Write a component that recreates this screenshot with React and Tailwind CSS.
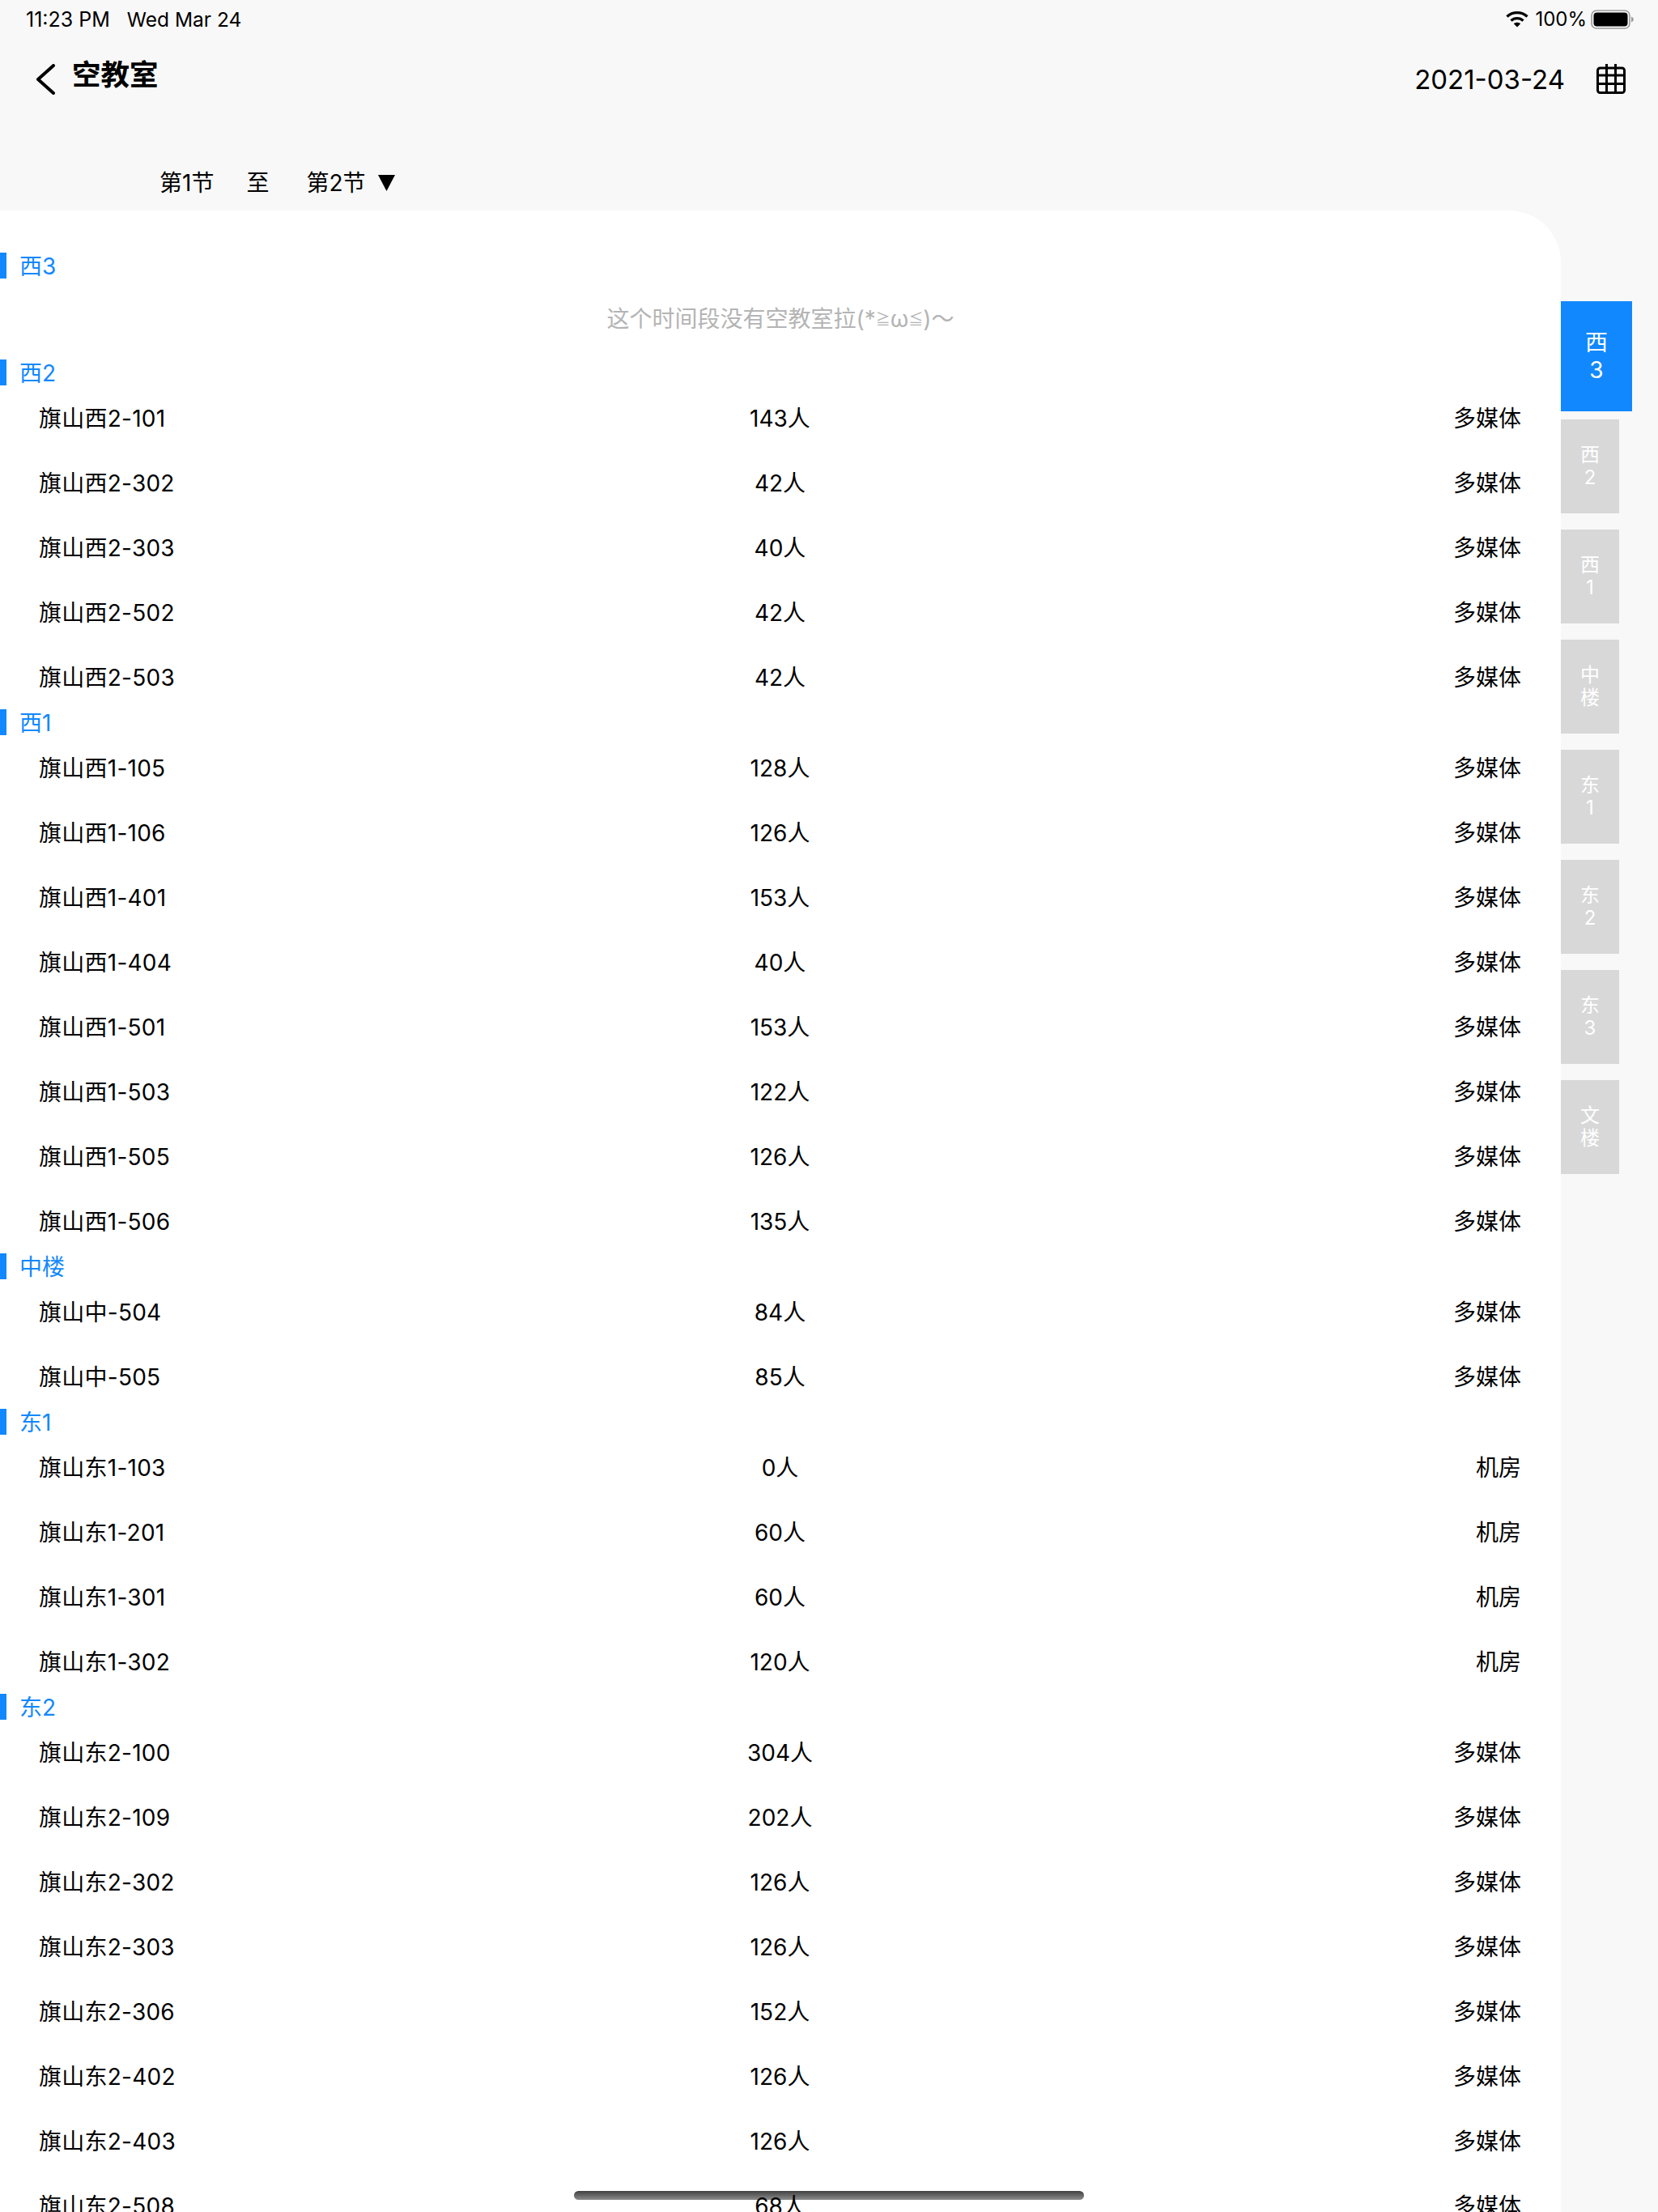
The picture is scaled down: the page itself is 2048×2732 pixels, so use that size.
import React from "react";

const font = "font-['Inter','Noto_Sans_CJK_SC',sans-serif]";

const sections = [
  { name: "西3", rows: [] },
  {
    name: "西2",
    rows: [
      ["旗山西2-101", "143人", "多媒体"],
      ["旗山西2-302", "42人", "多媒体"],
      ["旗山西2-303", "40人", "多媒体"],
      ["旗山西2-502", "42人", "多媒体"],
      ["旗山西2-503", "42人", "多媒体"],
    ],
  },
  {
    name: "西1",
    rows: [
      ["旗山西1-105", "128人", "多媒体"],
      ["旗山西1-106", "126人", "多媒体"],
      ["旗山西1-401", "153人", "多媒体"],
      ["旗山西1-404", "40人", "多媒体"],
      ["旗山西1-501", "153人", "多媒体"],
      ["旗山西1-503", "122人", "多媒体"],
      ["旗山西1-505", "126人", "多媒体"],
      ["旗山西1-506", "135人", "多媒体"],
    ],
  },
  {
    name: "中楼",
    rows: [
      ["旗山中-504", "84人", "多媒体"],
      ["旗山中-505", "85人", "多媒体"],
    ],
  },
  {
    name: "东1",
    rows: [
      ["旗山东1-103", "0人", "机房"],
      ["旗山东1-201", "60人", "机房"],
      ["旗山东1-301", "60人", "机房"],
      ["旗山东1-302", "120人", "机房"],
    ],
  },
  {
    name: "东2",
    rows: [
      ["旗山东2-100", "304人", "多媒体"],
      ["旗山东2-109", "202人", "多媒体"],
      ["旗山东2-302", "126人", "多媒体"],
      ["旗山东2-303", "126人", "多媒体"],
      ["旗山东2-306", "152人", "多媒体"],
      ["旗山东2-402", "126人", "多媒体"],
      ["旗山东2-403", "126人", "多媒体"],
      ["旗山东2-508", "68人", "多媒体"],
    ],
  },
];

const tabs = [
  ["西", "2"],
  ["西", "1"],
  ["中", "楼"],
  ["东", "1"],
  ["东", "2"],
  ["东", "3"],
  ["文", "楼"],
];

function StatusBar() {
  return (
    <div className="flex h-[46px] items-center justify-between pl-[32px] pr-[30px] pt-[1px] text-[25px] leading-[46px] text-black">
      <div className="flex gap-[21px]">
        <span>11:23 PM</span>
        <span className="text-[24.5px]">Wed Mar 24</span>
      </div>
      <div className="flex items-center">
        <svg width="28" height="21" viewBox="0 0 28 21" className="mr-[8px]" fill="none" stroke="black" strokeWidth="3.4">
          <path d="M1.5 7.5C8.5 1 19.5 1 26.5 7.5" />
          <path d="M6.5 12.5C10.8 8.6 17.2 8.6 21.5 12.5" />
          <path d="M14 20.5L9.8 16.2C12.2 14.2 15.8 14.2 18.2 16.2Z" fill="black" stroke="none" />
        </svg>
        <span className="mr-[5px] text-[24px]">100%</span>
        <svg width="53" height="24" viewBox="0 0 53 24">
          <rect x="1" y="1" width="47" height="22" rx="6" fill="none" stroke="#9a9a9a" strokeWidth="1.6" />
          <rect x="3.5" y="3.5" width="42" height="17" rx="4" fill="black" />
          <path d="M50 8.5C52 9.5 52.8 10.5 52.8 12C52.8 13.5 52 14.5 50 15.5Z" fill="#9a9a9a" />
        </svg>
      </div>
    </div>
  );
}

function Header() {
  return (
    <div className="flex h-[76px] items-start justify-between pl-[44px] pr-[40px]">
      <div className="flex items-start">
        <svg width="24" height="38" viewBox="0 0 24 38" className="mt-[33px]" fill="none" stroke="black" strokeWidth="4" strokeLinecap="round" strokeLinejoin="round">
          <path d="M22 2L3 19L22 36" />
        </svg>
        <span className="ml-[21px] mt-[23px] text-[35.5px] font-semibold leading-[48px] text-black">空教室</span>
      </div>
      <div className="flex items-start">
        <span className="mt-[32px] text-[33px] leading-[40px] text-black">2021-03-24</span>
        <svg width="36" height="37" viewBox="0 0 36 37" className="ml-[39px] mt-[33px]" fill="none" stroke="black" strokeWidth="3">
          <rect x="1.5" y="5" width="33" height="30.5" rx="3" />
          <path d="M1.5 14H34.5M1.5 24.5H34.5M12.5 5V35.5M23.5 5V35.5" />
          <path d="M12.5 0V8M23.5 0V8" />
        </svg>
      </div>
    </div>
  );
}

function Filter() {
  return (
    <div className="flex h-[62px] items-center pb-[7px] pl-[197px] text-[28px] leading-[40px] text-black">
      <span>第1节</span>
      <span className="ml-[40px]">至</span>
      <span className="ml-[46px]">第2节</span>
      <svg width="21" height="20" viewBox="0 0 21 20" className="ml-[16px]">
        <path d="M0 0H21L10.5 20Z" fill="black" />
      </svg>
    </div>
  );
}

function Section({ section }) {
  return (
    <div>
      <div className="flex h-[32px] items-center text-[28px] text-[#1288fe]">
        <div className="h-[32px] w-[8px] bg-[#1288fe]" />
        <span className="ml-[16px] pt-[1px] leading-[32px]">{section.name}</span>
      </div>
      {section.rows.length === 0 ? (
        <div className="flex h-[100px] items-center justify-center text-[28px] text-[#b4b4b4]">
          这个时间段没有空教室拉(*<span className="text-[18px]">≧</span>ω<span className="text-[18px]">≦</span>)～
        </div>
      ) : (
        section.rows.map((r) => (
          <div key={r[0]} className="grid h-[80px] grid-cols-3 items-center pl-[48px] pr-[49px] pt-[1px] text-[28px] text-black">
            <span className="tracking-[0.25px]">{r[0]}</span>
            <span className="text-center">{r[1]}</span>
            <span className="text-right">{r[2]}</span>
          </div>
        ))
      )}
    </div>
  );
}

function Tabs() {
  return (
    <div className="flex w-[120px] shrink-0 flex-col items-start pt-[112px]">
      <div className="flex h-[136px] w-[88px] flex-col items-center justify-center bg-[#1288fe] text-[28px] leading-[34px] text-white">
        <span>西</span>
        <span>3</span>
      </div>
      <div className="mt-[10px] flex flex-col gap-[20px]">
        {tabs.map((t, i) => (
          <div key={i} className="flex h-[116px] w-[72px] flex-col items-center justify-center bg-[#d8d8d8] text-[24px] leading-[28px] text-white">
            <span>{t[0]}</span>
            <span>{t[1]}</span>
          </div>
        ))}
      </div>
    </div>
  );
}

export default function App() {
  return (
    <div className={`relative flex h-[2732px] w-[2048px] flex-col overflow-hidden bg-[#f8f8f8] ${font}`}>
      <StatusBar />
      <Header />
      <div className="h-[76px]" />
      <Filter />
      <div className="flex min-h-0 flex-1">
        <div className="w-[1928px] overflow-hidden rounded-tr-[64px] bg-white pt-[52px]">
          {sections.map((s) => (
            <Section key={s.name} section={s} />
          ))}
        </div>
        <Tabs />
      </div>
      <div className="absolute left-[709px] top-[2706px] h-[11px] w-[630px] rounded-full bg-gradient-to-b from-black/75 to-black/45" />
    </div>
  );
}
